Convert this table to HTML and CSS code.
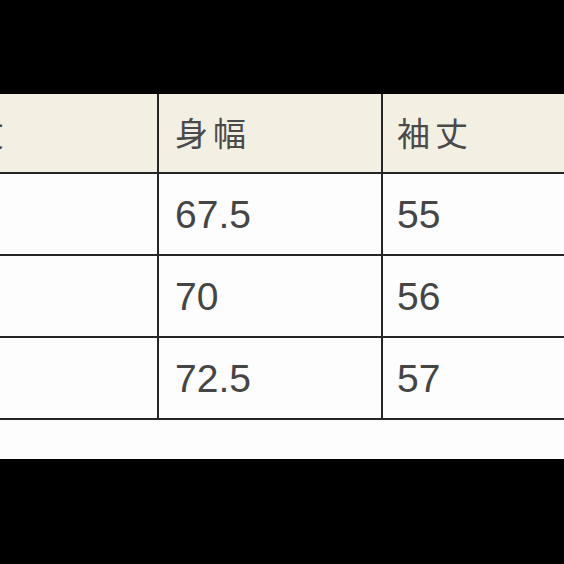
FILE: index.html
```html
<!DOCTYPE html>
<html lang="ja">
<head>
<meta charset="utf-8">
<title>サイズ表</title>
<link rel="stylesheet" href="styles.css">
</head>
<body>
<div class="sheet">
  <div class="size-table">
    <div class="cell head first"><span class="label">着丈</span></div>
    <div class="cell head">身幅</div>
    <div class="cell head last">袖丈</div>

    <div class="cell first"></div>
    <div class="cell num">67.5</div>
    <div class="cell num last">55</div>

    <div class="cell first"></div>
    <div class="cell num">70</div>
    <div class="cell num last">56</div>

    <div class="cell first"></div>
    <div class="cell num">72.5</div>
    <div class="cell num last">57</div>
  </div>
</div>
</body>
</html>
```

FILE: styles.css
```css
html, body {
  margin: 0;
  padding: 0;
  background: #000;
  height: 100%;
  overflow: hidden;
}

.sheet {
  margin-top: 94px;
  background: #fdfdfd;
  padding-bottom: 39px;
  overflow: hidden;
}

.size-table {
  display: grid;
  grid-template-columns: 218px 224px 260px;
  grid-template-rows: 80px 82px 82px 82px;
  margin-left: -59px;
  width: 702px;
}

.cell {
  box-sizing: border-box;
  border-right: 2px solid #262626;
  border-bottom: 2px solid #262626;
  display: flex;
  align-items: center;
  padding-left: 16px;
  color: #4a4a4a;
  background: #fdfdfd;
  white-space: nowrap;
  min-width: 0;
}

.cell.last {
  padding-left: 14px;
}

.cell.first {
  justify-content: flex-end;
  padding-left: 0;
  padding-right: 148px;
  overflow: hidden;
}

.label {
  flex-shrink: 0;
}

.head {
  background: #f3f0e3;
  font-family: "Noto Sans CJK JP", "Noto Sans", sans-serif;
  font-size: 33px;
  letter-spacing: 5px;
  padding-bottom: 2px;
}

.num {
  font-family: "Liberation Sans", Arial, sans-serif;
  font-size: 39px;
  color: #454545;
  padding-top: 2px;
}
```
